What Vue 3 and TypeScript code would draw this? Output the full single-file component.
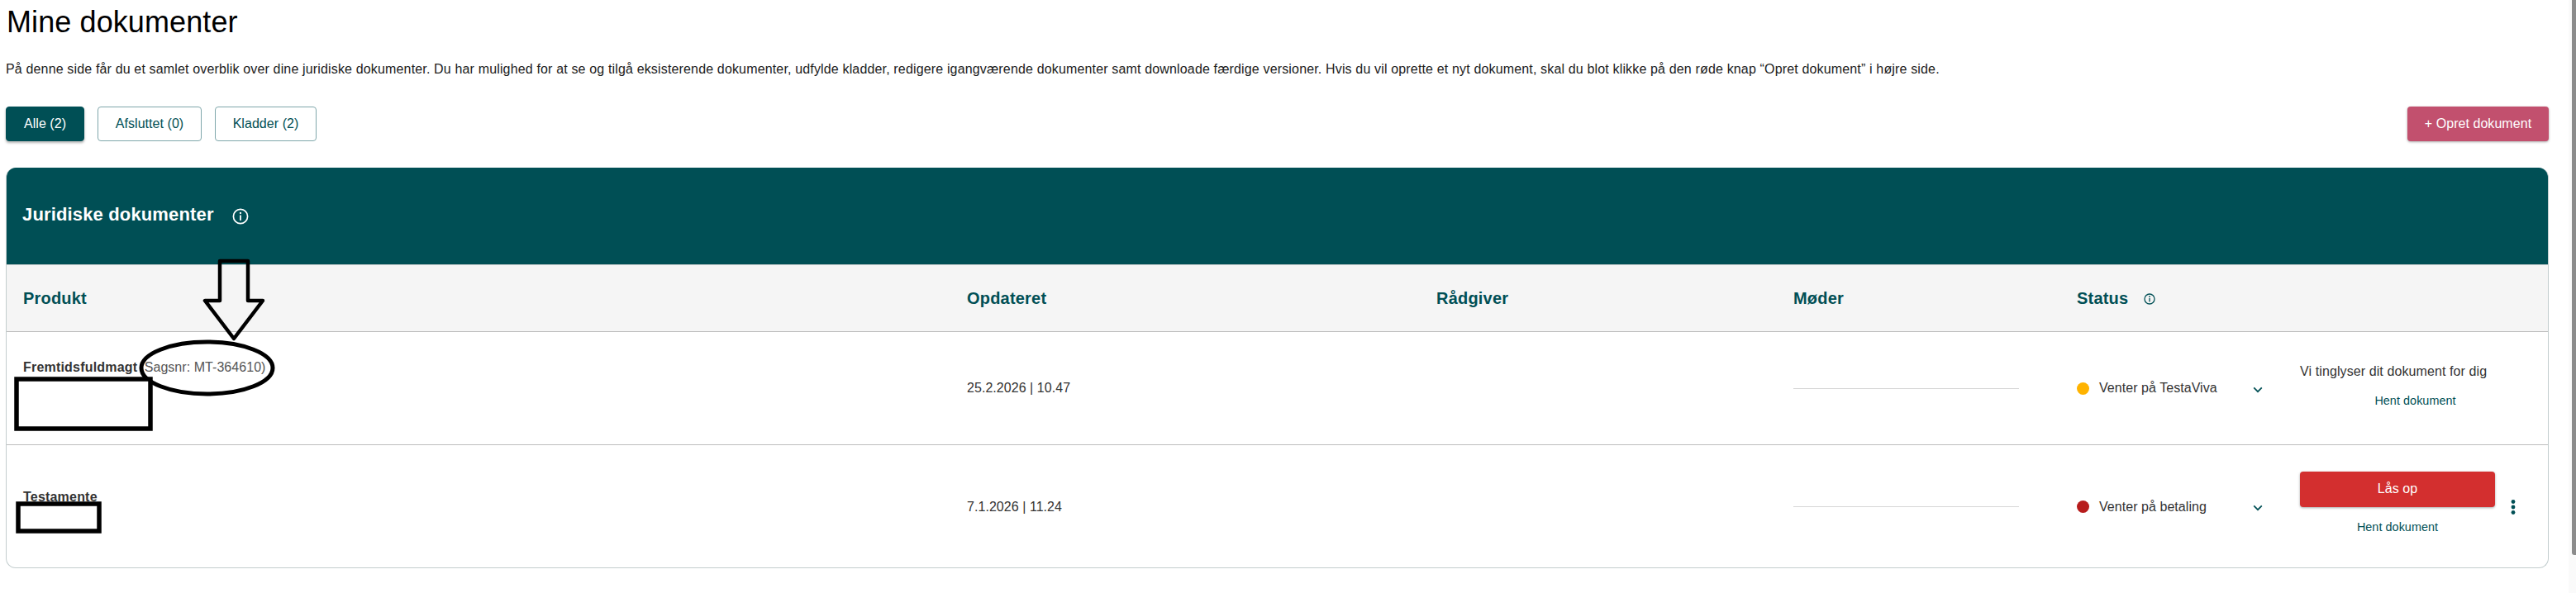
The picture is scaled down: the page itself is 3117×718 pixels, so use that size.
<script setup lang="ts">
/** Mine dokumenter: filter bar and a table of legal documents, with hand-drawn annotations on top */
interface Doc {
  name: string;
  caseNo?: string;
  updated: string;
  status: string;
  dot: string;
  note?: string;
  unlock?: boolean;
}

const filters = [
  { label: "Alle (2)", active: true },
  { label: "Afsluttet (0)", active: false },
  { label: "Kladder (2)", active: false },
];

const docs: Doc[] = [
  {
    name: "Fremtidsfuldmagt",
    caseNo: "(Sagsnr: MT-364610)",
    updated: "25.2.2026 | 10.47",
    status: "Venter på TestaViva",
    dot: "#ffb300",
    note: "Vi tinglyser dit dokument for dig",
  },
  {
    name: "Testamente",
    updated: "7.1.2026 | 11.24",
    status: "Venter på betaling",
    dot: "#b71c1c",
    unlock: true,
  },
];
</script>

<template>
  <div class="page">
    <h1 class="title">Mine dokumenter</h1>
    <p class="intro">
      På denne side får du et samlet overblik over dine juridiske dokumenter. Du har mulighed for at se og tilgå eksisterende dokumenter, udfylde kladder, redigere igangværende dokumenter samt downloade færdige versioner. Hvis du vil oprette et nyt dokument, skal du blot klikke på den røde knap “Opret dokument” i højre side.
    </p>

    <div class="toolbar">
      <button
        v-for="f in filters"
        :key="f.label"
        class="filter"
        :class="{ active: f.active }"
      >
        {{ f.label }}
      </button>
      <button class="create">+ Opret dokument</button>
    </div>

    <section class="panel">
      <header class="panel-head">
        <h2>Juridiske dokumenter</h2>
        <svg class="info-big" viewBox="0 0 20 20" aria-hidden="true">
          <circle cx="10" cy="10" r="8.6" fill="none" stroke="#fff" stroke-width="1.7" />
          <circle cx="10" cy="6" r="1.15" fill="#fff" />
          <rect x="9.1" y="8.5" width="1.8" height="6.4" fill="#fff" />
        </svg>
      </header>

      <div class="row head">
        <div>Produkt</div>
        <div>Opdateret</div>
        <div>Rådgiver</div>
        <div>Møder</div>
        <div class="status-head">
          Status
          <svg class="info-small" viewBox="0 0 14 14" aria-hidden="true">
            <circle cx="7" cy="7" r="6" fill="none" stroke="#004f55" stroke-width="1.3" />
            <circle cx="7" cy="4.2" r=".9" fill="#004f55" />
            <rect x="6.35" y="6" width="1.3" height="4.4" fill="#004f55" />
          </svg>
        </div>
        <div></div>
      </div>

      <div v-for="d in docs" :key="d.name" class="row body" :class="{ tall: d.unlock }">
        <div class="product">
          <strong>{{ d.name }}</strong>
          <span v-if="d.caseNo" class="case-no">{{ d.caseNo }}</span>
        </div>
        <div class="date">{{ d.updated }}</div>
        <div></div>
        <div class="meet"><span class="meet-line"></span></div>
        <div class="status">
          <span class="dot" :style="{ background: d.dot }"></span>
          <span class="status-text">{{ d.status }}</span>
          <svg class="chevron" viewBox="0 0 12 8" aria-hidden="true">
            <path d="M1.2 1.4 6 6.2l4.8-4.8" fill="none" stroke="#004f55" stroke-width="1.7" />
          </svg>
        </div>
        <div class="actions">
          <template v-if="d.unlock">
            <div class="unlock-wrap">
              <button class="unlock">Lås op</button>
              <a class="fetch">Hent dokument</a>
            </div>
            <svg class="kebab" viewBox="0 0 6 18" aria-hidden="true">
              <circle cx="3" cy="2.5" r="2.4" fill="#004f55" />
              <circle cx="3" cy="9" r="2.4" fill="#004f55" />
              <circle cx="3" cy="15.5" r="2.4" fill="#004f55" />
            </svg>
          </template>
          <div v-else class="note-wrap">
            <span class="note">{{ d.note }}</span>
            <a class="fetch">Hent dokument</a>
          </div>
        </div>
      </div>
    </section>

    <!-- annotations someone drew over the screenshot -->
    <svg class="marks" viewBox="0 0 3117 718" aria-hidden="true">
      <path
        d="M266 316H300V364H318L283 410L248 364H266Z"
        fill="none"
        stroke="#000"
        stroke-width="4.5"
        stroke-linejoin="round"
      />
      <ellipse cx="250.5" cy="445.5" rx="79.5" ry="31.5" fill="none" stroke="#000" stroke-width="5" />
      <rect x="20" y="459" width="162" height="60" fill="#fff" stroke="#000" stroke-width="5.5" />
      <rect x="22" y="610" width="98" height="33" fill="#fff" stroke="#000" stroke-width="5.5" />
    </svg>

    <div class="scrollbar"><div class="thumb"></div></div>
  </div>
</template>

<style>
html,
body {
  margin: 0;
  background: #fff;
  overflow: hidden;
}
</style>

<style scoped>
.page {
  position: relative;
  width: 3117px;
  height: 718px;
  box-sizing: border-box;
  padding: 0 33px 0 7px;
  font-family: "Liberation Sans", Arial, sans-serif;
  font-size: 16px;
  letter-spacing: 0.05px;
  color: #333;
  overflow: hidden;
}

.title {
  margin: 0;
  padding-left: 1px;
  height: 54px;
  font-size: 36px;
  line-height: 54px;
  font-weight: 400;
  letter-spacing: 0.1px;
  color: #000;
}

.intro {
  margin: 20px 0 0;
  height: 20px;
  line-height: 20px;
  letter-spacing: 0.155px;
  color: #212121;
  white-space: nowrap;
}

.toolbar {
  display: flex;
  gap: 16px;
  margin-top: 35px;
  height: 42px;
}

.toolbar button {
  box-sizing: border-box;
  height: 42px;
  border-radius: 4px;
  font: inherit;
  letter-spacing: inherit;
  padding: 0;
}

.filter {
  border: 1px solid #7fa7ab;
  background: #fff;
  color: #004f55;
  width: 126px;
}

.filter:nth-child(3) {
  width: 123px;
}

.filter.active {
  width: 95px;
  background: #004f55;
  border-color: #004f55;
  color: #fff;
  box-shadow: 0 2px 3px rgba(0, 0, 0, 0.3);
}

.toolbar .create {
  margin-left: auto;
  width: 171px;
  border: 0;
  background: #c2506e;
  color: #fff;
  box-shadow: 0 1px 3px rgba(0, 0, 0, 0.35);
}

.panel {
  margin-top: 32px;
  height: 485px;
  box-sizing: border-box;
  border: 1px solid #c3cdce;
  border-top: 0;
  border-radius: 12px;
  overflow: hidden;
}

.panel-head {
  display: flex;
  align-items: center;
  gap: 22px;
  height: 117px;
  margin: 0 -1px;
  padding-left: 20px;
  background: #004f55;
  color: #fff;
}

.panel-head h2 {
  margin: 0;
  font-size: 22px;
  line-height: 26px;
  letter-spacing: 0.15px;
  position: relative;
  top: -2px;
}

.info-big {
  width: 20px;
  height: 20px;
}

.row {
  display: grid;
  grid-template-columns: 1142px 568px 432px 343px 270px 1fr;
  align-items: center;
  padding-left: 20px;
  box-sizing: border-box;
  border-bottom: 1px solid #bdbdbd;
}

.row.head {
  height: 82px;
  background: #f5f5f5;
  border-top: 1px solid #bcc6c7;
  font-size: 20px;
  font-weight: 700;
  letter-spacing: 0.2px;
  color: #004f55;
}

.status-head {
  display: flex;
  align-items: center;
  gap: 19px;
}

.info-small {
  width: 14px;
  height: 14px;
  margin-top: 2px;
}

.row.body {
  height: 137px;
}

.row.body.tall {
  height: 149px;
  border-bottom: 0;
}

.product {
  align-self: start;
  margin-top: 34px;
  white-space: nowrap;
}

.product strong {
  letter-spacing: 0.2px;
}

.tall .product {
  margin-top: 54px;
}

.case-no {
  margin-left: 3px;
  color: #555;
}

.meet-line {
  display: block;
  width: 273px;
  height: 1px;
  background: #d6d6d6;
}

.status {
  display: flex;
  align-items: center;
}

.dot {
  width: 15px;
  height: 15px;
  border-radius: 50%;
  margin-right: 12px;
}

.status-text {
  width: 186px;
  white-space: nowrap;
}

.chevron {
  width: 12px;
  height: 8px;
  margin-top: 3px;
}

.actions {
  display: flex;
  align-items: center;
  gap: 19px;
}

.unlock-wrap {
  display: flex;
  flex-direction: column;
  align-items: center;
  width: 236px;
  gap: 16px;
  margin-top: -11px;
}

.unlock {
  width: 236px;
  height: 43px;
  border: 0;
  border-radius: 4px;
  background: #d32f2f;
  color: #fff;
  font: inherit;
  letter-spacing: inherit;
  padding: 0;
  box-shadow: 0 1px 3px rgba(0, 0, 0, 0.35);
}

.kebab {
  width: 6px;
  height: 18px;
  margin-top: 1px;
}

.note-wrap {
  display: flex;
  flex-direction: column;
  gap: 18px;
  margin-top: -6px;
}

.note {
  white-space: nowrap;
  letter-spacing: 0.1px;
}

.fetch {
  font-size: 14.4px;
  line-height: 16px;
  color: #004f55;
  text-align: center;
}

.note-wrap .fetch {
  width: 279px;
}

.marks {
  position: absolute;
  inset: 0;
  width: 3117px;
  height: 718px;
  pointer-events: none;
}

.scrollbar {
  position: absolute;
  top: 0;
  right: 0;
  bottom: 0;
  width: 9px;
  background: #fafafa;
}

.thumb {
  margin-left: 4px;
  height: 672px;
  background: #8c8c8c;
  border-radius: 0 0 0 3px;
}
</style>
